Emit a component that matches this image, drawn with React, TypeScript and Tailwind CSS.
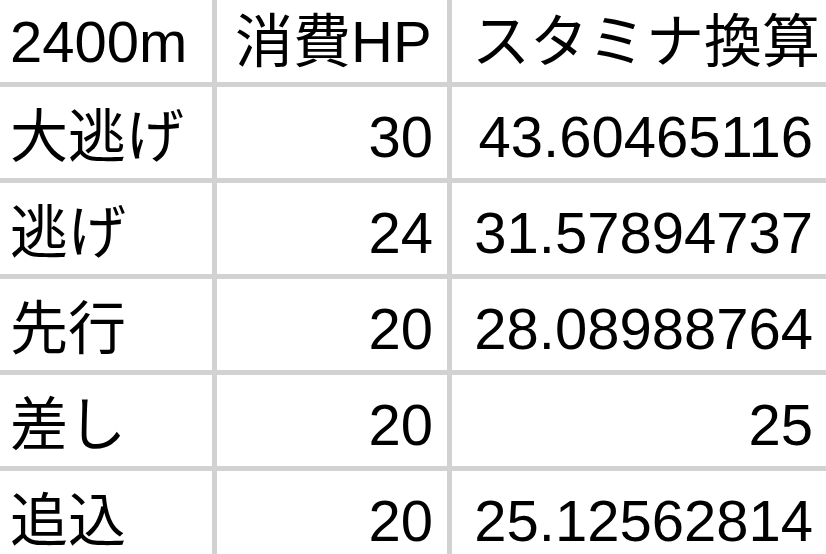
const rows: [string, string, string][] = [
  ["大逃げ", "30", "43.60465116"],
  ["逃げ", "24", "31.57894737"],
  ["先行", "20", "28.08988764"],
  ["差し", "20", "25"],
  ["追込", "20", "25.12562814"],
];

const font = {
  fontFamily: '"Liberation Sans", "Noto Sans CJK JP", sans-serif',
};

export default function App() {
  return (
    <div
      className="w-[826px] h-[554px] overflow-hidden bg-white text-black text-[58px] leading-none"
      style={font}
    >
      <div className="grid grid-cols-[212px_230px_1fr] gap-[5px] bg-[#d2d2d2] pb-[5px]">
        <div className="bg-white h-[82px] flex items-center pl-[10px] pt-[2px]">2400m</div>
        <div className="bg-white h-[82px] flex items-center pl-[18px] pt-[2px]">消費HP</div>
        <div className="bg-white h-[82px] flex items-center pl-[20px] pt-[2px]">スタミナ換算</div>
        {rows.map(([a, b, c]) => (
          <>
            <div key={a + "a"} className="bg-white h-[91px] flex items-center pl-[10px] pt-[8px]">
              {a}
            </div>
            <div key={a + "b"} className="bg-white h-[91px] flex items-center justify-end pr-[14px] pt-[8px]">
              {b}
            </div>
            <div key={a + "c"} className="bg-white h-[91px] flex items-center justify-end pr-[13px] pt-[8px]">
              {c}
            </div>
          </>
        ))}
      </div>
    </div>
  );
}
